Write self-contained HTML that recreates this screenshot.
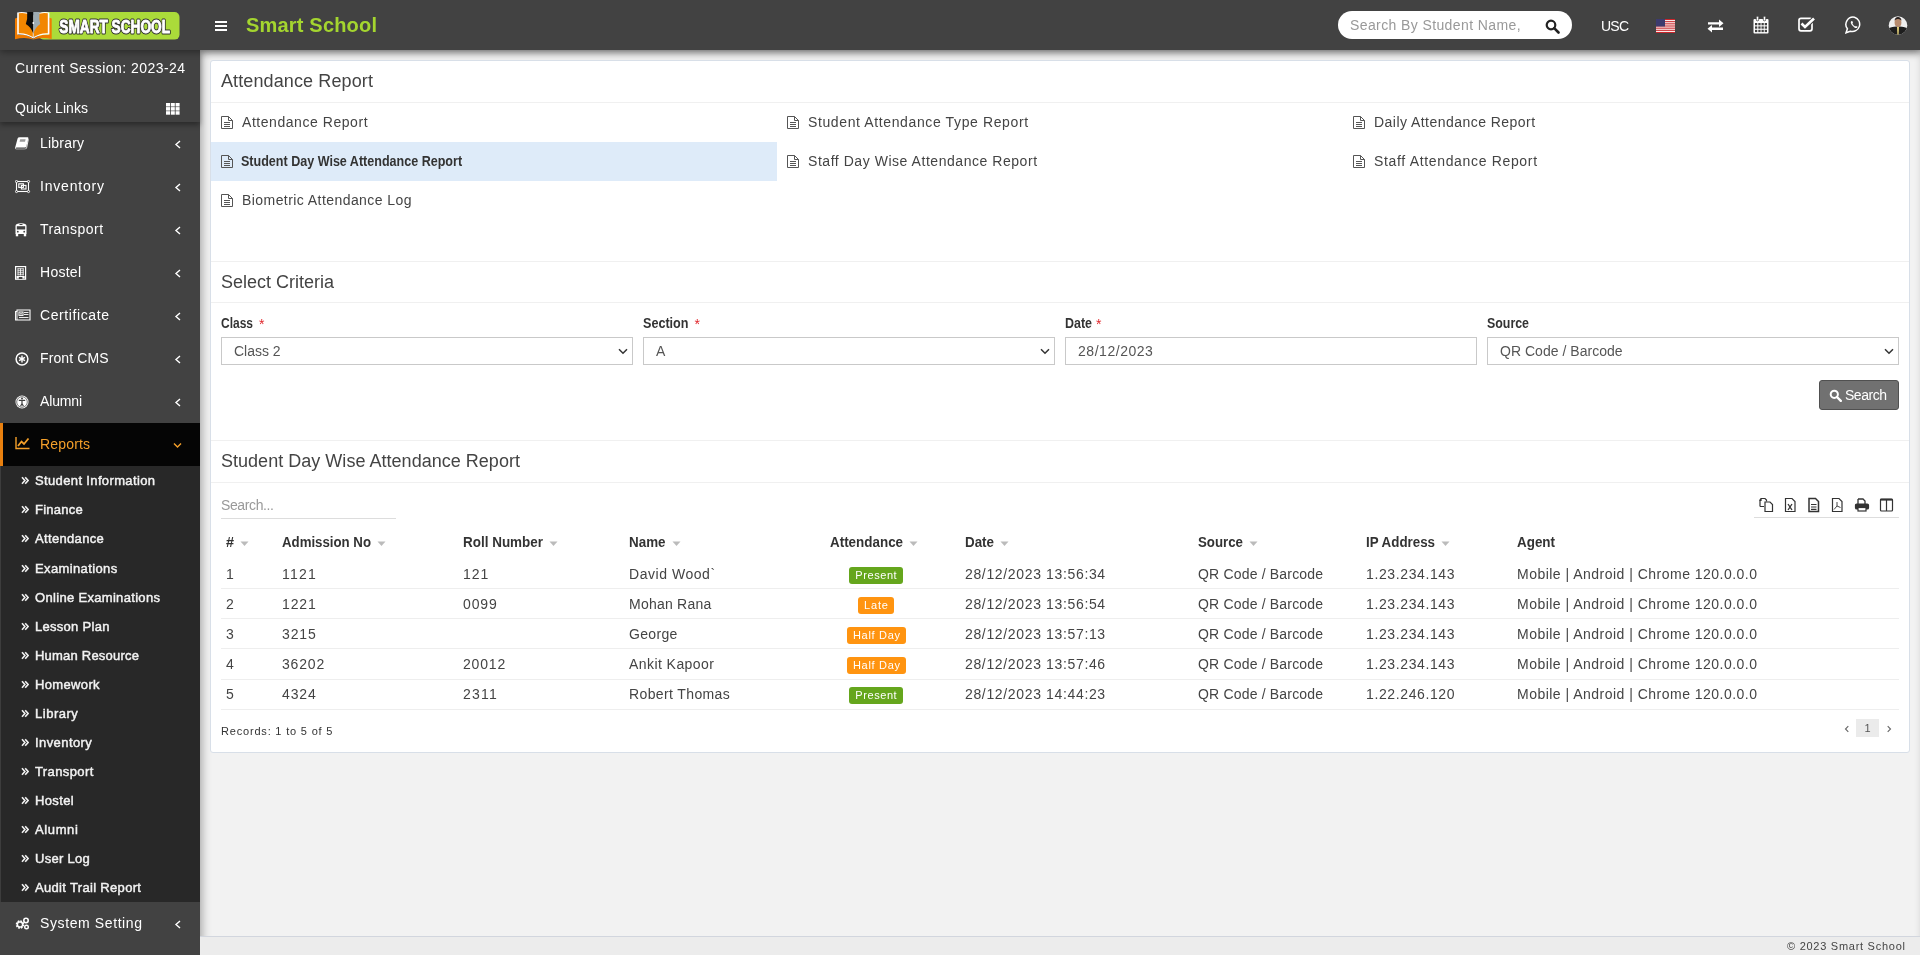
<!DOCTYPE html>
<html><head><meta charset="utf-8"><title>Smart School</title>
<style>
*{box-sizing:border-box;margin:0;padding:0}
html,body{width:1920px;height:955px;overflow:hidden}
body{font-family:"Liberation Sans",sans-serif;background:#f2f2f2;position:relative;color:#444;will-change:transform}
.t{position:absolute;white-space:nowrap;font-family:"Liberation Sans",sans-serif}
.r{position:absolute;display:block}
</style></head><body>
<div class="r" style="left:0px;top:0px;width:1920px;height:50px;background:#424242;z-index:6;box-shadow:0 2px 7px rgba(0,0,0,.38)"></div>
<svg class="r" style="left:0;top:0;z-index:7" width="200" height="50" viewBox="0 0 200 50">
<rect x="39" y="12" width="140.5" height="27.6" rx="5" fill="#abdb3a"/>
<path d="M15 18.6 L18 17.6 L18 35 Q26 33.6 33.3 39 L33.3 39.6 Q25 36.6 15 39.3 Z" fill="#f07b00"/>
<path d="M51.7 18.6 L48.6 17.6 L48.6 35 Q40.6 33.6 33.3 39 L33.3 39.6 Q41.6 36.6 51.7 38.9 Z" fill="#f07b00"/>
<path d="M17.2 12.4 Q26.5 11 33.3 15.5 V38.6 Q26 33.8 17.2 34.6 Z" fill="#fff"/>
<path d="M49.4 12.4 Q40.1 11 33.3 15.5 V38.6 Q40.6 33.8 49.4 34.6 Z" fill="#fff"/>
<path d="M18.8 13.2 Q26.5 12 32.8 16.2 V37 Q26 32.6 18.8 33.2 Z" fill="#f28600"/>
<path d="M47.8 13.2 Q40.1 12 33.8 16.2 V37 Q40.6 32.6 47.8 33.2 Z" fill="#f28600"/>
<path d="M27.2 12 H33.3 V33.5 Q31 27 25.8 24 Q27.8 19 27.2 12 Z" fill="#0c0c0c"/>
<path d="M39.6 12 H33.3 V33.5 Q35.6 27 40.2 24 Q38.8 19 39.6 12 Z" fill="#9eabb2"/>
<circle cx="33.3" cy="23" r="0.9" fill="#fff"/>
<text x="59.3" y="33" font-family="Liberation Sans" font-weight="bold" font-size="18.6" fill="#2e2e2e" stroke="#2e2e2e" stroke-width="3" stroke-linejoin="round" textLength="110.7" lengthAdjust="spacingAndGlyphs">SMART SCHOOL</text>
<text x="59.3" y="33" font-family="Liberation Sans" font-weight="bold" font-size="18.6" fill="#fff" stroke="#fff" stroke-width="0.9" stroke-linejoin="round" textLength="110.7" lengthAdjust="spacingAndGlyphs">SMART SCHOOL</text>
</svg>
<div class="r" style="left:215px;top:21px;width:12px;height:10px;z-index:7;border-top:2px solid #fff;border-bottom:2px solid #fff"></div>
<div class="r" style="left:215px;top:25px;width:12px;height:2px;z-index:7;background:#fff"></div>
<div class="t" style="left:246.00px;top:15.00px;font-size:20px;line-height:20px;color:#a4d52f;font-weight:bold;letter-spacing:0.188px;z-index:7;">Smart School</div>
<div class="r" style="left:1338px;top:11px;width:234px;height:28px;background:#fff;border-radius:14px;z-index:7"></div>
<div class="t" style="left:1350.00px;top:18.00px;font-size:14px;line-height:14px;color:#999;letter-spacing:0.394px;z-index:7;">Search By Student Name,</div>
<svg class="r" style="left:1545px;top:19px;z-index:7" width="15" height="15" viewBox="0 0 15 15"><circle cx="6" cy="6" r="4.3" fill="none" stroke="#222" stroke-width="2.2"/><path d="M9.2 9.2 L13.5 13.5" stroke="#222" stroke-width="2.6" stroke-linecap="round"/></svg>
<div class="t" style="left:1601.00px;top:19.00px;font-size:14px;line-height:14px;color:#fff;letter-spacing:-0.781px;z-index:7;">USC</div>
<svg class="r" style="left:1656px;top:19px;z-index:7" width="19" height="14" viewBox="0 0 19 14">
<rect width="19" height="14" fill="#fff"/>
<g fill="#c8262b"><rect y="0" width="19" height="1.1"/><rect y="2.15" width="19" height="1.1"/><rect y="4.3" width="19" height="1.1"/><rect y="6.45" width="19" height="1.1"/><rect y="8.6" width="19" height="1.1"/><rect y="10.75" width="19" height="1.1"/><rect y="12.9" width="19" height="1.1"/></g>
<rect width="9" height="7.5" fill="#3c3b6e"/></svg>
<svg class="r" style="left:1707px;top:19px;z-index:7" width="17" height="14" viewBox="0 0 17 14" fill="#fff">
<path d="M1 3.2 H12 V0.5 L16.5 4.3 L12 8 V5.4 H1Z"/><path d="M16 8.6 H5 V6 L0.5 9.8 L5 13.5 V10.9 H16Z"/></svg>
<svg class="r" style="left:1753px;top:16px;z-index:7" width="16" height="18" viewBox="0 0 16 18" fill="#fff">
<path d="M1.5 3 H14.5 Q15.5 3 15.5 4 V16.5 Q15.5 17.6 14.5 17.6 H1.5 Q0.5 17.6 0.5 16.5 V4 Q0.5 3 1.5 3Z"/>
<g fill="#424242"><rect x="2" y="7" width="2.3" height="2.3"/><rect x="5.3" y="7" width="2.3" height="2.3"/><rect x="8.5" y="7" width="2.3" height="2.3"/><rect x="11.7" y="7" width="2.3" height="2.3"/>
<rect x="2" y="10.4" width="2.3" height="2.3"/><rect x="5.3" y="10.4" width="2.3" height="2.3"/><rect x="8.5" y="10.4" width="2.3" height="2.3"/><rect x="11.7" y="10.4" width="2.3" height="2.3"/>
<rect x="2" y="13.8" width="2.3" height="2.3"/><rect x="5.3" y="13.8" width="2.3" height="2.3"/><rect x="8.5" y="13.8" width="2.3" height="2.3"/><rect x="11.7" y="13.8" width="2.3" height="2.3"/></g>
<rect x="3.3" y="0.3" width="2.4" height="4.5" rx="1" fill="#fff" stroke="#424242" stroke-width="0.8"/><rect x="10.3" y="0.3" width="2.4" height="4.5" rx="1" fill="#fff" stroke="#424242" stroke-width="0.8"/></svg>
<svg class="r" style="left:1798px;top:17px;z-index:7" width="18" height="15" viewBox="0 0 18 15">
<rect x="1" y="1.3" width="13" height="12.5" rx="2" fill="none" stroke="#fff" stroke-width="1.7"/>
<path d="M3.5 6.5 L7 10 L16 1.5" fill="none" stroke="#424242" stroke-width="4.5"/>
<path d="M3.5 6.5 L7 10 L16 1.5" fill="none" stroke="#fff" stroke-width="2.6"/></svg>
<svg class="r" style="left:1845px;top:16px;z-index:7" width="18" height="18" viewBox="0 0 18 18">
<path d="M9.5 1.2 A7.3 7.3 0 1 1 5.2 15.2 L1 16.8 L2.4 12.8 A7.3 7.3 0 0 1 9.5 1.2Z" fill="none" stroke="#fff" stroke-width="1.5"/>
<path d="M6.6 5 Q5.6 5.6 5.8 7 Q6.6 9.6 9.4 11.6 Q11.2 12.6 12.2 11.6 L12.6 10.8 L10.9 9.9 L10.1 10.6 Q8.3 9.6 7.4 7.6 L8 6.8 L7.3 5Z" fill="#fff"/></svg>
<svg class="r" style="left:1888px;top:16px;z-index:7" width="20" height="19" viewBox="0 0 20 19">
<defs><clipPath id="ac"><circle cx="10" cy="9.5" r="9.3"/></clipPath></defs>
<g clip-path="url(#ac)"><rect width="20" height="19" fill="#eee"/>
<path d="M0 19 L1 12 Q5 10 10 10.5 Q15 10 19 12 L20 19Z" fill="#1e1e1e"/>
<path d="M9 11 L11 11 L10.6 19 L9.4 19Z" fill="#e6d27a"/>
<ellipse cx="10" cy="6.5" rx="3.4" ry="4.4" fill="#b78b6e"/>
<path d="M6.5 4.5 Q7 1 10 1 Q13 1 13.5 4.5 Q12 2.8 10 3 Q8 2.8 6.5 4.5Z" fill="#2a2220"/></g></svg>
<div class="r" style="left:0px;top:50px;width:200px;height:905px;background:#424242;z-index:4"></div>
<div class="t" style="left:15.00px;top:61.00px;font-size:14px;line-height:14px;color:#fff;letter-spacing:0.458px;z-index:5;">Current Session: 2023-24</div>
<div class="r" style="left:0px;top:50px;width:200px;height:72px;background:#424242;z-index:5;box-shadow:0 3px 5px rgba(0,0,0,.35)"></div>
<div class="t" style="left:15.00px;top:101.00px;font-size:14px;line-height:14px;color:#fff;letter-spacing:0.066px;z-index:6;">Quick Links</div>
<div class="t" style="left:15.00px;top:61.00px;font-size:14px;line-height:14px;color:#fff;letter-spacing:0.458px;z-index:6;">Current Session: 2023-24</div>
<svg class="r" style="left:166px;top:103px;z-index:6" width="14" height="12" viewBox="0 0 14 12" fill="#fff"><rect x="0.0" y="0.0" width="4" height="3.5"/><rect x="0.0" y="4.1" width="4" height="3.5"/><rect x="0.0" y="8.2" width="4" height="3.5"/><rect x="4.8" y="0.0" width="4" height="3.5"/><rect x="4.8" y="4.1" width="4" height="3.5"/><rect x="4.8" y="8.2" width="4" height="3.5"/><rect x="9.6" y="0.0" width="4" height="3.5"/><rect x="9.6" y="4.1" width="4" height="3.5"/><rect x="9.6" y="8.2" width="4" height="3.5"/></svg>
<div class="t" style="left:40.00px;top:136.00px;font-size:14px;line-height:14px;color:#fff;letter-spacing:0.206px;z-index:5;">Library</div>
<svg class="r" style="left:15px;top:137px;z-index:5" width="16" height="14" viewBox="0 0 16 14"><path d="M4.6 0.3 H12.6 Q13.6 0.3 13.3 1.4 L11.3 9.6 Q11 10.6 10 10.6 H1.6 Q0.8 10.6 0.6 11.2 Q0.6 11.8 1.4 11.8 H10.6 L10.9 11.8 Q10.4 12.2 9.6 12.2 H1.2 Q-0.2 12.2 0.1 10.8 L2.6 1.6 Q3 0.3 4.6 0.3Z" fill="#fff"/><path d="M5.2 2.3 H10.6 L10 4.8 H4.6Z" fill="#9a9a9a"/><path d="M12.6 3 L13.3 2.4 L11.6 10.8 Q11.3 11.8 10.6 11.8" fill="none" stroke="#fff" stroke-width="0.9"/></svg>
<svg class="r" style="left:174px;top:140px;z-index:5" width="8" height="9" viewBox="0 0 8 9"><path d="M6 1 L2 4.5 L6 8" fill="none" stroke="#fff" stroke-width="1.4"/></svg>
<div class="t" style="left:40.00px;top:179.00px;font-size:14px;line-height:14px;color:#fff;letter-spacing:0.805px;z-index:5;">Inventory</div>
<svg class="r" style="left:15px;top:180px;z-index:5" width="16" height="14" viewBox="0 0 16 14"><rect x="1.5" y="1.5" width="12" height="10" fill="none" stroke="#fff" stroke-width="1.1"/><rect x="3.8" y="3.8" width="4.6" height="3.6" fill="none" stroke="#fff" stroke-width="1.1"/><rect x="6.4" y="5.4" width="4.6" height="3.6" fill="none" stroke="#fff" stroke-width="1.1"/><g fill="#424242" stroke="#fff" stroke-width="0.9"><circle cx="1.5" cy="1.5" r="1.1"/><circle cx="13.5" cy="1.5" r="1.1"/><circle cx="1.5" cy="11.5" r="1.1"/><circle cx="13.5" cy="11.5" r="1.1"/></g></svg>
<svg class="r" style="left:174px;top:183px;z-index:5" width="8" height="9" viewBox="0 0 8 9"><path d="M6 1 L2 4.5 L6 8" fill="none" stroke="#fff" stroke-width="1.4"/></svg>
<div class="t" style="left:40.00px;top:222.00px;font-size:14px;line-height:14px;color:#fff;letter-spacing:0.455px;z-index:5;">Transport</div>
<svg class="r" style="left:15px;top:223px;z-index:5" width="16" height="14" viewBox="0 0 16 14"><path d="M0.5 3 Q0.5 0.3 6 0.3 Q11.5 0.3 11.5 3 V11 H0.5Z" fill="#fff"/><rect x="1.8" y="3.2" width="8.4" height="3.3" fill="#424242"/><circle cx="2.8" cy="8.7" r="0.9" fill="#424242"/><circle cx="9.2" cy="8.7" r="0.9" fill="#424242"/><rect x="0.8" y="10.5" width="2.4" height="2.8" fill="#fff"/><rect x="8.8" y="10.5" width="2.4" height="2.8" fill="#fff"/><rect x="4.5" y="1" width="3" height="1" fill="#424242"/></svg>
<svg class="r" style="left:174px;top:226px;z-index:5" width="8" height="9" viewBox="0 0 8 9"><path d="M6 1 L2 4.5 L6 8" fill="none" stroke="#fff" stroke-width="1.4"/></svg>
<div class="t" style="left:40.00px;top:265.00px;font-size:14px;line-height:14px;color:#fff;letter-spacing:0.266px;z-index:5;">Hostel</div>
<svg class="r" style="left:15px;top:266px;z-index:5" width="16" height="14" viewBox="0 0 16 14"><rect x="0.6" y="0.6" width="10" height="12.6" fill="none" stroke="#fff" stroke-width="1.2"/><g fill="#fff"><rect x="2.6" y="2.4" width="6" height="0.8"/><rect x="2.6" y="4.4" width="6" height="0.8"/><rect x="2.6" y="6.4" width="6" height="0.8"/><rect x="2.6" y="8.4" width="6" height="0.8"/><rect x="2.6" y="2.4" width="0.8" height="7"/><rect x="5.2" y="2.4" width="0.8" height="7"/><rect x="7.8" y="2.4" width="0.8" height="7"/><rect x="1.5" y="10" width="8.2" height="2.5"/></g><rect x="3.8" y="11" width="3.6" height="2" fill="#424242"/></svg>
<svg class="r" style="left:174px;top:269px;z-index:5" width="8" height="9" viewBox="0 0 8 9"><path d="M6 1 L2 4.5 L6 8" fill="none" stroke="#fff" stroke-width="1.4"/></svg>
<div class="t" style="left:40.00px;top:308.00px;font-size:14px;line-height:14px;color:#fff;letter-spacing:0.600px;z-index:5;">Certificate</div>
<svg class="r" style="left:15px;top:309px;z-index:5" width="16" height="14" viewBox="0 0 16 14"><path d="M2 1 H15 V11 H0.6 V2.5 H2Z" fill="none" stroke="#fff" stroke-width="1.1"/><path d="M2 2.5 V11" stroke="#fff" stroke-width="0.9"/><rect x="4" y="3" width="4" height="3.4" fill="none" stroke="#fff" stroke-width="1"/><rect x="5.2" y="4.2" width="1.6" height="1.2" fill="#fff"/><path d="M9 3.5 H13.5 M9 5.5 H13.5 M4 8.5 H13.5" stroke="#fff" stroke-width="0.9"/></svg>
<svg class="r" style="left:174px;top:312px;z-index:5" width="8" height="9" viewBox="0 0 8 9"><path d="M6 1 L2 4.5 L6 8" fill="none" stroke="#fff" stroke-width="1.4"/></svg>
<div class="t" style="left:40.00px;top:351.00px;font-size:14px;line-height:14px;color:#fff;letter-spacing:0.105px;z-index:5;">Front CMS</div>
<svg class="r" style="left:15px;top:352px;z-index:5" width="16" height="14" viewBox="0 0 16 14"><circle cx="7" cy="7" r="5.9" fill="none" stroke="#fff" stroke-width="1.5"/><path d="M7 3.6 V10.4 M4.05 5.3 L9.95 8.7 M4.05 8.7 L9.95 5.3" stroke="#fff" stroke-width="1.4"/></svg>
<svg class="r" style="left:174px;top:355px;z-index:5" width="8" height="9" viewBox="0 0 8 9"><path d="M6 1 L2 4.5 L6 8" fill="none" stroke="#fff" stroke-width="1.4"/></svg>
<div class="t" style="left:40.00px;top:394.00px;font-size:14px;line-height:14px;color:#fff;letter-spacing:-0.156px;z-index:5;">Alumni</div>
<svg class="r" style="left:15px;top:395px;z-index:5" width="16" height="14" viewBox="0 0 16 14"><circle cx="7" cy="7" r="6.5" fill="#fff"/><circle cx="7" cy="7" r="5.3" fill="none" stroke="#424242" stroke-width="0.7"/><circle cx="7" cy="3.6" r="1" fill="#424242"/><path d="M3.8 5.4 H10.2 M7 5.4 V8.4 L5.6 11.2 M7 8.4 L8.4 11.2" stroke="#424242" stroke-width="1.2" fill="none"/></svg>
<svg class="r" style="left:174px;top:398px;z-index:5" width="8" height="9" viewBox="0 0 8 9"><path d="M6 1 L2 4.5 L6 8" fill="none" stroke="#fff" stroke-width="1.4"/></svg>
<div class="r" style="left:0px;top:423px;width:200px;height:43px;background:#050505;z-index:5"></div>
<div class="r" style="left:0px;top:423px;width:3px;height:43px;background:#e8800f;z-index:6"></div>
<div class="t" style="left:40.00px;top:437.00px;font-size:14px;line-height:14px;color:#f5a02a;letter-spacing:0.167px;z-index:6;">Reports</div>
<svg class="r" style="left:15px;top:436px;z-index:6" width="15" height="14" viewBox="0 0 15 14"><path d="M1 1 V12.5 H14.5" fill="none" stroke="#f5a02a" stroke-width="1.4"/><path d="M3 10 L6.5 5.5 L9 8 L13.5 2.5" fill="none" stroke="#f5a02a" stroke-width="1.8"/></svg>
<svg class="r" style="left:173px;top:442px;z-index:6" width="9" height="7" viewBox="0 0 9 7"><path d="M1 1.5 L4.5 5 L8 1.5" fill="none" stroke="#f5a02a" stroke-width="1.4"/></svg>
<div class="r" style="left:0px;top:466px;width:200px;height:436px;background:#282828;z-index:5;border-left:1px solid #3d3d3d"></div>
<div class="t" style="left:35.00px;top:474.00px;font-size:13px;line-height:13px;color:#f2f2f2;letter-spacing:0.363px;z-index:6;-webkit-text-stroke:0.45px #f2f2f2;">Student Information</div>
<svg class="r" style="left:21px;top:476px;z-index:6" width="8" height="9" viewBox="0 0 8 9"><path d="M1 1.2 L3.9 4.5 L1 7.8 M4.2 1.2 L7.1 4.5 L4.2 7.8" fill="none" stroke="#f2f2f2" stroke-width="1.6"/></svg>
<div class="t" style="left:35.00px;top:503.00px;font-size:13px;line-height:13px;color:#f2f2f2;letter-spacing:0.247px;z-index:6;-webkit-text-stroke:0.45px #f2f2f2;">Finance</div>
<svg class="r" style="left:21px;top:505px;z-index:6" width="8" height="9" viewBox="0 0 8 9"><path d="M1 1.2 L3.9 4.5 L1 7.8 M4.2 1.2 L7.1 4.5 L4.2 7.8" fill="none" stroke="#f2f2f2" stroke-width="1.6"/></svg>
<div class="t" style="left:35.00px;top:532.00px;font-size:13px;line-height:13px;color:#f2f2f2;letter-spacing:0.335px;z-index:6;-webkit-text-stroke:0.45px #f2f2f2;">Attendance</div>
<svg class="r" style="left:21px;top:534px;z-index:6" width="8" height="9" viewBox="0 0 8 9"><path d="M1 1.2 L3.9 4.5 L1 7.8 M4.2 1.2 L7.1 4.5 L4.2 7.8" fill="none" stroke="#f2f2f2" stroke-width="1.6"/></svg>
<div class="t" style="left:35.00px;top:562.00px;font-size:13px;line-height:13px;color:#f2f2f2;letter-spacing:0.373px;z-index:6;-webkit-text-stroke:0.45px #f2f2f2;">Examinations</div>
<svg class="r" style="left:21px;top:564px;z-index:6" width="8" height="9" viewBox="0 0 8 9"><path d="M1 1.2 L3.9 4.5 L1 7.8 M4.2 1.2 L7.1 4.5 L4.2 7.8" fill="none" stroke="#f2f2f2" stroke-width="1.6"/></svg>
<div class="t" style="left:35.00px;top:591.00px;font-size:13px;line-height:13px;color:#f2f2f2;letter-spacing:0.317px;z-index:6;-webkit-text-stroke:0.45px #f2f2f2;">Online Examinations</div>
<svg class="r" style="left:21px;top:593px;z-index:6" width="8" height="9" viewBox="0 0 8 9"><path d="M1 1.2 L3.9 4.5 L1 7.8 M4.2 1.2 L7.1 4.5 L4.2 7.8" fill="none" stroke="#f2f2f2" stroke-width="1.6"/></svg>
<div class="t" style="left:35.00px;top:620.00px;font-size:13px;line-height:13px;color:#f2f2f2;letter-spacing:0.286px;z-index:6;-webkit-text-stroke:0.45px #f2f2f2;">Lesson Plan</div>
<svg class="r" style="left:21px;top:622px;z-index:6" width="8" height="9" viewBox="0 0 8 9"><path d="M1 1.2 L3.9 4.5 L1 7.8 M4.2 1.2 L7.1 4.5 L4.2 7.8" fill="none" stroke="#f2f2f2" stroke-width="1.6"/></svg>
<div class="t" style="left:35.00px;top:649.00px;font-size:13px;line-height:13px;color:#f2f2f2;letter-spacing:0.212px;z-index:6;-webkit-text-stroke:0.45px #f2f2f2;">Human Resource</div>
<svg class="r" style="left:21px;top:651px;z-index:6" width="8" height="9" viewBox="0 0 8 9"><path d="M1 1.2 L3.9 4.5 L1 7.8 M4.2 1.2 L7.1 4.5 L4.2 7.8" fill="none" stroke="#f2f2f2" stroke-width="1.6"/></svg>
<div class="t" style="left:35.00px;top:678.00px;font-size:13px;line-height:13px;color:#f2f2f2;letter-spacing:0.352px;z-index:6;-webkit-text-stroke:0.45px #f2f2f2;">Homework</div>
<svg class="r" style="left:21px;top:680px;z-index:6" width="8" height="9" viewBox="0 0 8 9"><path d="M1 1.2 L3.9 4.5 L1 7.8 M4.2 1.2 L7.1 4.5 L4.2 7.8" fill="none" stroke="#f2f2f2" stroke-width="1.6"/></svg>
<div class="t" style="left:35.00px;top:707.00px;font-size:13px;line-height:13px;color:#f2f2f2;letter-spacing:0.516px;z-index:6;-webkit-text-stroke:0.45px #f2f2f2;">Library</div>
<svg class="r" style="left:21px;top:709px;z-index:6" width="8" height="9" viewBox="0 0 8 9"><path d="M1 1.2 L3.9 4.5 L1 7.8 M4.2 1.2 L7.1 4.5 L4.2 7.8" fill="none" stroke="#f2f2f2" stroke-width="1.6"/></svg>
<div class="t" style="left:35.00px;top:736.00px;font-size:13px;line-height:13px;color:#f2f2f2;letter-spacing:0.424px;z-index:6;-webkit-text-stroke:0.45px #f2f2f2;">Inventory</div>
<svg class="r" style="left:21px;top:738px;z-index:6" width="8" height="9" viewBox="0 0 8 9"><path d="M1 1.2 L3.9 4.5 L1 7.8 M4.2 1.2 L7.1 4.5 L4.2 7.8" fill="none" stroke="#f2f2f2" stroke-width="1.6"/></svg>
<div class="t" style="left:35.00px;top:765.00px;font-size:13px;line-height:13px;color:#f2f2f2;letter-spacing:0.390px;z-index:6;-webkit-text-stroke:0.45px #f2f2f2;">Transport</div>
<svg class="r" style="left:21px;top:767px;z-index:6" width="8" height="9" viewBox="0 0 8 9"><path d="M1 1.2 L3.9 4.5 L1 7.8 M4.2 1.2 L7.1 4.5 L4.2 7.8" fill="none" stroke="#f2f2f2" stroke-width="1.6"/></svg>
<div class="t" style="left:35.00px;top:794.00px;font-size:13px;line-height:13px;color:#f2f2f2;letter-spacing:0.352px;z-index:6;-webkit-text-stroke:0.45px #f2f2f2;">Hostel</div>
<svg class="r" style="left:21px;top:796px;z-index:6" width="8" height="9" viewBox="0 0 8 9"><path d="M1 1.2 L3.9 4.5 L1 7.8 M4.2 1.2 L7.1 4.5 L4.2 7.8" fill="none" stroke="#f2f2f2" stroke-width="1.6"/></svg>
<div class="t" style="left:35.00px;top:823.00px;font-size:13px;line-height:13px;color:#f2f2f2;letter-spacing:0.613px;z-index:6;-webkit-text-stroke:0.45px #f2f2f2;">Alumni</div>
<svg class="r" style="left:21px;top:825px;z-index:6" width="8" height="9" viewBox="0 0 8 9"><path d="M1 1.2 L3.9 4.5 L1 7.8 M4.2 1.2 L7.1 4.5 L4.2 7.8" fill="none" stroke="#f2f2f2" stroke-width="1.6"/></svg>
<div class="t" style="left:35.00px;top:852.00px;font-size:13px;line-height:13px;color:#f2f2f2;letter-spacing:0.286px;z-index:6;-webkit-text-stroke:0.45px #f2f2f2;">User Log</div>
<svg class="r" style="left:21px;top:854px;z-index:6" width="8" height="9" viewBox="0 0 8 9"><path d="M1 1.2 L3.9 4.5 L1 7.8 M4.2 1.2 L7.1 4.5 L4.2 7.8" fill="none" stroke="#f2f2f2" stroke-width="1.6"/></svg>
<div class="t" style="left:35.00px;top:881.00px;font-size:13px;line-height:13px;color:#f2f2f2;letter-spacing:0.326px;z-index:6;-webkit-text-stroke:0.45px #f2f2f2;">Audit Trail Report</div>
<svg class="r" style="left:21px;top:883px;z-index:6" width="8" height="9" viewBox="0 0 8 9"><path d="M1 1.2 L3.9 4.5 L1 7.8 M4.2 1.2 L7.1 4.5 L4.2 7.8" fill="none" stroke="#f2f2f2" stroke-width="1.6"/></svg>
<div class="t" style="left:40.00px;top:916.00px;font-size:14px;line-height:14px;color:#fff;letter-spacing:0.605px;z-index:5;">System Setting</div>
<svg class="r" style="left:15px;top:917px;z-index:5" width="15" height="13" viewBox="0 0 15 13"><circle cx="5" cy="7.5" r="3.2" fill="none" stroke="#fff" stroke-width="2.2" stroke-dasharray="1.6 0.9"/><circle cx="5" cy="7.5" r="2.6" fill="none" stroke="#fff" stroke-width="1.4"/><circle cx="11" cy="3.5" r="2.2" fill="none" stroke="#fff" stroke-width="1.6"/><circle cx="11.5" cy="10" r="1.8" fill="none" stroke="#fff" stroke-width="1.4"/></svg>
<svg class="r" style="left:174px;top:920px;z-index:5" width="8" height="9" viewBox="0 0 8 9"><path d="M6 1 L2 4.5 L6 8" fill="none" stroke="#fff" stroke-width="1.4"/></svg>
<div class="r" style="left:200px;top:50px;width:1720px;height:905px;background:#f2f2f2;z-index:1;box-shadow:inset 3px 3px 10px -1px rgba(0,0,0,.32)"></div>
<div class="r" style="left:210px;top:60px;width:1700px;height:693px;background:#fff;border:1px solid #d8dfe8;border-radius:3px;z-index:2"></div>
<div class="r" style="left:211px;top:102px;width:1698px;height:1px;background:#f0f0f0;z-index:3"></div>
<div class="r" style="left:211px;top:261px;width:1698px;height:1px;background:#f0f0f0;z-index:3"></div>
<div class="r" style="left:211px;top:302px;width:1698px;height:1px;background:#f0f0f0;z-index:3"></div>
<div class="r" style="left:211px;top:440px;width:1698px;height:1px;background:#f0f0f0;z-index:3"></div>
<div class="r" style="left:211px;top:482px;width:1698px;height:1px;background:#f0f0f0;z-index:3"></div>
<div class="t" style="left:221.00px;top:72.00px;font-size:18px;line-height:18px;color:#444;letter-spacing:0.116px;z-index:3;">Attendance Report</div>
<div class="r" style="left:211px;top:142px;width:566px;height:39px;background:#deebf9;z-index:3"></div>
<svg class="r" style="left:221px;top:116px;z-index:4" width="12" height="13" viewBox="0 0 12 13"><path d="M0.5 0.5 H7.5 L11.5 4.5 V12.5 H0.5Z" fill="none" stroke="#555" stroke-width="1"/><path d="M7.5 0.5 V4.5 H11.5" fill="none" stroke="#555" stroke-width="1"/><path d="M3 6.5 H9 M3 8.5 H9 M3 10.5 H9" stroke="#555" stroke-width="1"/></svg>
<div class="t" style="left:242.00px;top:115.00px;font-size:14px;line-height:14px;color:#444;letter-spacing:0.550px;z-index:4;">Attendance Report</div>
<svg class="r" style="left:787px;top:116px;z-index:4" width="12" height="13" viewBox="0 0 12 13"><path d="M0.5 0.5 H7.5 L11.5 4.5 V12.5 H0.5Z" fill="none" stroke="#555" stroke-width="1"/><path d="M7.5 0.5 V4.5 H11.5" fill="none" stroke="#555" stroke-width="1"/><path d="M3 6.5 H9 M3 8.5 H9 M3 10.5 H9" stroke="#555" stroke-width="1"/></svg>
<div class="t" style="left:808.00px;top:115.00px;font-size:14px;line-height:14px;color:#444;letter-spacing:0.619px;z-index:4;">Student Attendance Type Report</div>
<svg class="r" style="left:1353px;top:116px;z-index:4" width="12" height="13" viewBox="0 0 12 13"><path d="M0.5 0.5 H7.5 L11.5 4.5 V12.5 H0.5Z" fill="none" stroke="#555" stroke-width="1"/><path d="M7.5 0.5 V4.5 H11.5" fill="none" stroke="#555" stroke-width="1"/><path d="M3 6.5 H9 M3 8.5 H9 M3 10.5 H9" stroke="#555" stroke-width="1"/></svg>
<div class="t" style="left:1374.00px;top:115.00px;font-size:14px;line-height:14px;color:#444;letter-spacing:0.457px;z-index:4;">Daily Attendance Report</div>
<svg class="r" style="left:221px;top:155px;z-index:4" width="12" height="13" viewBox="0 0 12 13"><path d="M0.5 0.5 H7.5 L11.5 4.5 V12.5 H0.5Z" fill="none" stroke="#555" stroke-width="1"/><path d="M7.5 0.5 V4.5 H11.5" fill="none" stroke="#555" stroke-width="1"/><path d="M3 6.5 H9 M3 8.5 H9 M3 10.5 H9" stroke="#555" stroke-width="1"/></svg>
<div class="t" style="left:241.00px;top:154.00px;font-size:14px;line-height:14px;color:#333;font-weight:bold;transform:scaleX(0.8961);transform-origin:0 0;z-index:4;">Student Day Wise Attendance Report</div>
<svg class="r" style="left:787px;top:155px;z-index:4" width="12" height="13" viewBox="0 0 12 13"><path d="M0.5 0.5 H7.5 L11.5 4.5 V12.5 H0.5Z" fill="none" stroke="#555" stroke-width="1"/><path d="M7.5 0.5 V4.5 H11.5" fill="none" stroke="#555" stroke-width="1"/><path d="M3 6.5 H9 M3 8.5 H9 M3 10.5 H9" stroke="#555" stroke-width="1"/></svg>
<div class="t" style="left:808.00px;top:154.00px;font-size:14px;line-height:14px;color:#444;letter-spacing:0.543px;z-index:4;">Staff Day Wise Attendance Report</div>
<svg class="r" style="left:1353px;top:155px;z-index:4" width="12" height="13" viewBox="0 0 12 13"><path d="M0.5 0.5 H7.5 L11.5 4.5 V12.5 H0.5Z" fill="none" stroke="#555" stroke-width="1"/><path d="M7.5 0.5 V4.5 H11.5" fill="none" stroke="#555" stroke-width="1"/><path d="M3 6.5 H9 M3 8.5 H9 M3 10.5 H9" stroke="#555" stroke-width="1"/></svg>
<div class="t" style="left:1374.00px;top:154.00px;font-size:14px;line-height:14px;color:#444;letter-spacing:0.665px;z-index:4;">Staff Attendance Report</div>
<svg class="r" style="left:221px;top:194px;z-index:4" width="12" height="13" viewBox="0 0 12 13"><path d="M0.5 0.5 H7.5 L11.5 4.5 V12.5 H0.5Z" fill="none" stroke="#555" stroke-width="1"/><path d="M7.5 0.5 V4.5 H11.5" fill="none" stroke="#555" stroke-width="1"/><path d="M3 6.5 H9 M3 8.5 H9 M3 10.5 H9" stroke="#555" stroke-width="1"/></svg>
<div class="t" style="left:242.00px;top:193.00px;font-size:14px;line-height:14px;color:#444;letter-spacing:0.435px;z-index:4;">Biometric Attendance Log</div>
<div class="t" style="left:221.00px;top:273.00px;font-size:18px;line-height:18px;color:#444;z-index:3;">Select Criteria</div>
<div class="t" style="left:221.00px;top:316.00px;font-size:14px;line-height:14px;color:#333;font-weight:bold;transform:scaleX(0.8569);transform-origin:0 0;z-index:3;">Class</div>
<div class="t" style="left:259.00px;top:317.00px;font-size:14px;line-height:14px;color:#e0262b;z-index:3;">*</div>
<div class="r" style="left:221px;top:337px;width:412px;height:28px;background:#fff;border:1px solid #c9c9c9;z-index:3"></div>
<div class="t" style="left:234.00px;top:344.00px;font-size:14px;line-height:14px;color:#555;letter-spacing:-0.016px;z-index:4;">Class 2</div>
<svg class="r" style="left:618px;top:348px;z-index:4" width="10" height="7" viewBox="0 0 10 7"><path d="M1 1.2 L5 5.2 L9 1.2" fill="none" stroke="#333" stroke-width="1.5"/></svg>
<div class="t" style="left:643.00px;top:316.00px;font-size:14px;line-height:14px;color:#333;font-weight:bold;transform:scaleX(0.9002);transform-origin:0 0;z-index:3;">Section</div>
<div class="t" style="left:694.50px;top:317.00px;font-size:14px;line-height:14px;color:#e0262b;z-index:3;">*</div>
<div class="r" style="left:643px;top:337px;width:412px;height:28px;background:#fff;border:1px solid #c9c9c9;z-index:3"></div>
<div class="t" style="left:656.00px;top:344.00px;font-size:14px;line-height:14px;color:#555;z-index:4;">A</div>
<svg class="r" style="left:1040px;top:348px;z-index:4" width="10" height="7" viewBox="0 0 10 7"><path d="M1 1.2 L5 5.2 L9 1.2" fill="none" stroke="#333" stroke-width="1.5"/></svg>
<div class="t" style="left:1065.00px;top:316.00px;font-size:14px;line-height:14px;color:#333;font-weight:bold;transform:scaleX(0.8903);transform-origin:0 0;z-index:3;">Date</div>
<div class="t" style="left:1096.00px;top:317.00px;font-size:14px;line-height:14px;color:#e0262b;z-index:3;">*</div>
<div class="r" style="left:1065px;top:337px;width:412px;height:28px;background:#fff;border:1px solid #c9c9c9;z-index:3"></div>
<div class="t" style="left:1078.00px;top:344.00px;font-size:14px;line-height:14px;color:#555;letter-spacing:0.538px;z-index:4;">28/12/2023</div>
<div class="t" style="left:1487.00px;top:316.00px;font-size:14px;line-height:14px;color:#333;font-weight:bold;transform:scaleX(0.8851);transform-origin:0 0;z-index:3;">Source</div>
<div class="r" style="left:1487px;top:337px;width:412px;height:28px;background:#fff;border:1px solid #c9c9c9;z-index:3"></div>
<div class="t" style="left:1500.00px;top:344.00px;font-size:14px;line-height:14px;color:#555;letter-spacing:0.028px;z-index:4;">QR Code / Barcode</div>
<svg class="r" style="left:1884px;top:348px;z-index:4" width="10" height="7" viewBox="0 0 10 7"><path d="M1 1.2 L5 5.2 L9 1.2" fill="none" stroke="#333" stroke-width="1.5"/></svg>
<div class="r" style="left:1819px;top:380px;width:80px;height:30px;background:#717171;border:1px solid #505050;border-radius:3px;z-index:3"></div>
<svg class="r" style="left:1829px;top:389px;z-index:4" width="13" height="13" viewBox="0 0 13 13"><circle cx="5.3" cy="5.3" r="3.6" fill="none" stroke="#fff" stroke-width="2"/><path d="M8 8 L11.8 11.8" stroke="#fff" stroke-width="2.4" stroke-linecap="round"/></svg>
<div class="t" style="left:1845.00px;top:388.00px;font-size:14px;line-height:14px;color:#fff;letter-spacing:-0.469px;z-index:4;">Search</div>
<div class="t" style="left:221.00px;top:452.00px;font-size:18px;line-height:18px;color:#444;letter-spacing:0.024px;z-index:3;">Student Day Wise Attendance Report</div>
<div class="t" style="left:221.00px;top:498.00px;font-size:14px;line-height:14px;color:#999;letter-spacing:-0.377px;z-index:3;">Search...</div>
<div class="r" style="left:221px;top:518px;width:175px;height:1px;background:#ddd;z-index:3"></div>
<svg class="r" style="left:1758px;top:497px;z-index:4" width="140" height="16" viewBox="0 0 140 16" fill="none" stroke="#333" stroke-width="1.2"><path d="M3 1.5 H7 L8.5 3 V4.5 M2 9.5 V3 L3 1.5 M2 9.5 H6"/><path d="M7 5 H12 L14.5 7.5 V14.5 H7Z"/><path d="M3 1.5 V3.5 H1.5"/><path d="M27.5 1.5 H34 L37 4.5 V14.5 H27.5Z"/><path d="M30 7 L34 13 M34 7 L30 13" stroke-width="1.3"/><path d="M51 1.5 H57.5 L60.5 4.5 V14.5 H51Z" stroke-width="1.5"/><path d="M53 7.5 H58.5 M53 10 H58.5 M53 12.3 H58.5"/><path d="M74.5 1.5 H81 L84 4.5 V14.5 H74.5Z"/><path d="M79 5 V9 L76 12.5 M79 9 L82.5 10.5" stroke-width="0.9"/><path d="M100 2 H105 L107 4 V7 M100 7 V2" stroke-width="1.3"/><rect x="97.5" y="7" width="13" height="5" rx="1.2" fill="#333"/><rect x="100" y="10.5" width="8" height="3.5" fill="#fff" stroke="#333"/><rect x="122.5" y="2" width="12" height="12" rx="1"/><path d="M122.5 2.7 H134.5" stroke-width="1.8"/><path d="M128.5 2 V14"/></svg>
<div class="r" style="left:1754px;top:517px;width:145px;height:1px;background:#ddd;z-index:3"></div>
<div class="t" style="left:226.00px;top:535.00px;font-size:14px;line-height:14px;color:#333;font-weight:bold;transform:scaleX(1.0281);transform-origin:0 0;z-index:3;">#</div>
<svg class="r" style="left:240.0px;top:541px;z-index:3" width="9" height="6" viewBox="0 0 9 6"><path d="M0.5 0.5 H8.5 L4.5 5Z" fill="#bbb"/></svg>
<div class="t" style="left:282.00px;top:535.00px;font-size:14px;line-height:14px;color:#333;font-weight:bold;transform:scaleX(0.9459);transform-origin:0 0;z-index:3;">Admission No</div>
<svg class="r" style="left:377.0px;top:541px;z-index:3" width="9" height="6" viewBox="0 0 9 6"><path d="M0.5 0.5 H8.5 L4.5 5Z" fill="#bbb"/></svg>
<div class="t" style="left:463.00px;top:535.00px;font-size:14px;line-height:14px;color:#333;font-weight:bold;transform:scaleX(0.9613);transform-origin:0 0;z-index:3;">Roll Number</div>
<svg class="r" style="left:549.0px;top:541px;z-index:3" width="9" height="6" viewBox="0 0 9 6"><path d="M0.5 0.5 H8.5 L4.5 5Z" fill="#bbb"/></svg>
<div class="t" style="left:629.00px;top:535.00px;font-size:14px;line-height:14px;color:#333;font-weight:bold;transform:scaleX(0.9574);transform-origin:0 0;z-index:3;">Name</div>
<svg class="r" style="left:671.5px;top:541px;z-index:3" width="9" height="6" viewBox="0 0 9 6"><path d="M0.5 0.5 H8.5 L4.5 5Z" fill="#bbb"/></svg>
<div class="t" style="left:830.00px;top:535.00px;font-size:14px;line-height:14px;color:#333;font-weight:bold;transform:scaleX(0.9582);transform-origin:0 0;z-index:3;">Attendance</div>
<svg class="r" style="left:909.0px;top:541px;z-index:3" width="9" height="6" viewBox="0 0 9 6"><path d="M0.5 0.5 H8.5 L4.5 5Z" fill="#bbb"/></svg>
<div class="t" style="left:965.00px;top:535.00px;font-size:14px;line-height:14px;color:#333;font-weight:bold;transform:scaleX(0.9562);transform-origin:0 0;z-index:3;">Date</div>
<svg class="r" style="left:1000.0px;top:541px;z-index:3" width="9" height="6" viewBox="0 0 9 6"><path d="M0.5 0.5 H8.5 L4.5 5Z" fill="#bbb"/></svg>
<div class="t" style="left:1198.00px;top:535.00px;font-size:14px;line-height:14px;color:#333;font-weight:bold;transform:scaleX(0.9483);transform-origin:0 0;z-index:3;">Source</div>
<svg class="r" style="left:1249.0px;top:541px;z-index:3" width="9" height="6" viewBox="0 0 9 6"><path d="M0.5 0.5 H8.5 L4.5 5Z" fill="#bbb"/></svg>
<div class="t" style="left:1366.00px;top:535.00px;font-size:14px;line-height:14px;color:#333;font-weight:bold;transform:scaleX(0.9536);transform-origin:0 0;z-index:3;">IP Address</div>
<svg class="r" style="left:1441.0px;top:541px;z-index:3" width="9" height="6" viewBox="0 0 9 6"><path d="M0.5 0.5 H8.5 L4.5 5Z" fill="#bbb"/></svg>
<div class="t" style="left:1517.00px;top:535.00px;font-size:14px;line-height:14px;color:#333;font-weight:bold;transform:scaleX(0.9586);transform-origin:0 0;z-index:3;">Agent</div>
<div class="t" style="left:226.00px;top:567.00px;font-size:14px;line-height:14px;color:#444;z-index:3;">1</div>
<div class="t" style="left:282.00px;top:567.00px;font-size:14px;line-height:14px;color:#444;letter-spacing:1.210px;z-index:3;">1121</div>
<div class="t" style="left:463.00px;top:567.00px;font-size:14px;line-height:14px;color:#444;letter-spacing:0.975px;z-index:3;">121</div>
<div class="t" style="left:629.00px;top:567.00px;font-size:14px;line-height:14px;color:#444;letter-spacing:0.545px;z-index:3;">David Wood`</div>
<div class="t" style="left:965.00px;top:567.00px;font-size:14px;line-height:14px;color:#444;letter-spacing:0.650px;z-index:3;">28/12/2023 13:56:34</div>
<div class="t" style="left:1198.00px;top:567.00px;font-size:14px;line-height:14px;color:#444;letter-spacing:0.182px;z-index:3;">QR Code / Barcode</div>
<div class="t" style="left:1366.00px;top:567.00px;font-size:14px;line-height:14px;color:#444;letter-spacing:0.618px;z-index:3;">1.23.234.143</div>
<div class="t" style="left:1517.00px;top:567.00px;font-size:14px;line-height:14px;color:#444;letter-spacing:0.482px;z-index:3;">Mobile | Android | Chrome 120.0.0.0</div>
<div class="r" style="left:849px;top:567px;width:54px;height:17px;background:#65a61d;border-radius:3px;z-index:3"></div>
<div class="t" style="left:855.36px;top:570.00px;font-size:11px;line-height:11px;color:#fff;letter-spacing:0.557px;z-index:4;">Present</div>
<div class="r" style="left:221px;top:588px;width:1678px;height:1px;background:#eeeeee;z-index:3"></div>
<div class="t" style="left:226.00px;top:597.00px;font-size:14px;line-height:14px;color:#444;z-index:3;">2</div>
<div class="t" style="left:282.00px;top:597.00px;font-size:14px;line-height:14px;color:#444;letter-spacing:0.866px;z-index:3;">1221</div>
<div class="t" style="left:463.00px;top:597.00px;font-size:14px;line-height:14px;color:#444;letter-spacing:0.866px;z-index:3;">0099</div>
<div class="t" style="left:629.00px;top:597.00px;font-size:14px;line-height:14px;color:#444;letter-spacing:0.238px;z-index:3;">Mohan Rana</div>
<div class="t" style="left:965.00px;top:597.00px;font-size:14px;line-height:14px;color:#444;letter-spacing:0.650px;z-index:3;">28/12/2023 13:56:54</div>
<div class="t" style="left:1198.00px;top:597.00px;font-size:14px;line-height:14px;color:#444;letter-spacing:0.182px;z-index:3;">QR Code / Barcode</div>
<div class="t" style="left:1366.00px;top:597.00px;font-size:14px;line-height:14px;color:#444;letter-spacing:0.618px;z-index:3;">1.23.234.143</div>
<div class="t" style="left:1517.00px;top:597.00px;font-size:14px;line-height:14px;color:#444;letter-spacing:0.482px;z-index:3;">Mobile | Android | Chrome 120.0.0.0</div>
<div class="r" style="left:858px;top:597px;width:36px;height:17px;background:#ff9410;border-radius:3px;z-index:3"></div>
<div class="t" style="left:864.03px;top:600.00px;font-size:11px;line-height:11px;color:#fff;letter-spacing:0.833px;z-index:4;">Late</div>
<div class="r" style="left:221px;top:618px;width:1678px;height:1px;background:#eeeeee;z-index:3"></div>
<div class="t" style="left:226.00px;top:627.00px;font-size:14px;line-height:14px;color:#444;z-index:3;">3</div>
<div class="t" style="left:282.00px;top:627.00px;font-size:14px;line-height:14px;color:#444;letter-spacing:0.866px;z-index:3;">3215</div>
<div class="t" style="left:629.00px;top:627.00px;font-size:14px;line-height:14px;color:#444;letter-spacing:0.333px;z-index:3;">George</div>
<div class="t" style="left:965.00px;top:627.00px;font-size:14px;line-height:14px;color:#444;letter-spacing:0.650px;z-index:3;">28/12/2023 13:57:13</div>
<div class="t" style="left:1198.00px;top:627.00px;font-size:14px;line-height:14px;color:#444;letter-spacing:0.182px;z-index:3;">QR Code / Barcode</div>
<div class="t" style="left:1366.00px;top:627.00px;font-size:14px;line-height:14px;color:#444;letter-spacing:0.618px;z-index:3;">1.23.234.143</div>
<div class="t" style="left:1517.00px;top:627.00px;font-size:14px;line-height:14px;color:#444;letter-spacing:0.482px;z-index:3;">Mobile | Android | Chrome 120.0.0.0</div>
<div class="r" style="left:847px;top:627px;width:59px;height:17px;background:#ff9410;border-radius:3px;z-index:3"></div>
<div class="t" style="left:852.92px;top:630.00px;font-size:11px;line-height:11px;color:#fff;letter-spacing:0.710px;z-index:4;">Half Day</div>
<div class="r" style="left:221px;top:648px;width:1678px;height:1px;background:#eeeeee;z-index:3"></div>
<div class="t" style="left:226.00px;top:657.00px;font-size:14px;line-height:14px;color:#444;z-index:3;">4</div>
<div class="t" style="left:282.00px;top:657.00px;font-size:14px;line-height:14px;color:#444;letter-spacing:0.812px;z-index:3;">36202</div>
<div class="t" style="left:463.00px;top:657.00px;font-size:14px;line-height:14px;color:#444;letter-spacing:0.812px;z-index:3;">20012</div>
<div class="t" style="left:629.00px;top:657.00px;font-size:14px;line-height:14px;color:#444;letter-spacing:0.434px;z-index:3;">Ankit Kapoor</div>
<div class="t" style="left:965.00px;top:657.00px;font-size:14px;line-height:14px;color:#444;letter-spacing:0.650px;z-index:3;">28/12/2023 13:57:46</div>
<div class="t" style="left:1198.00px;top:657.00px;font-size:14px;line-height:14px;color:#444;letter-spacing:0.182px;z-index:3;">QR Code / Barcode</div>
<div class="t" style="left:1366.00px;top:657.00px;font-size:14px;line-height:14px;color:#444;letter-spacing:0.618px;z-index:3;">1.23.234.143</div>
<div class="t" style="left:1517.00px;top:657.00px;font-size:14px;line-height:14px;color:#444;letter-spacing:0.482px;z-index:3;">Mobile | Android | Chrome 120.0.0.0</div>
<div class="r" style="left:847px;top:657px;width:59px;height:17px;background:#ff9410;border-radius:3px;z-index:3"></div>
<div class="t" style="left:852.92px;top:660.00px;font-size:11px;line-height:11px;color:#fff;letter-spacing:0.710px;z-index:4;">Half Day</div>
<div class="r" style="left:221px;top:679px;width:1678px;height:1px;background:#eeeeee;z-index:3"></div>
<div class="t" style="left:226.00px;top:687.00px;font-size:14px;line-height:14px;color:#444;z-index:3;">5</div>
<div class="t" style="left:282.00px;top:687.00px;font-size:14px;line-height:14px;color:#444;letter-spacing:0.866px;z-index:3;">4324</div>
<div class="t" style="left:463.00px;top:687.00px;font-size:14px;line-height:14px;color:#444;letter-spacing:1.210px;z-index:3;">2311</div>
<div class="t" style="left:629.00px;top:687.00px;font-size:14px;line-height:14px;color:#444;letter-spacing:0.377px;z-index:3;">Robert Thomas</div>
<div class="t" style="left:965.00px;top:687.00px;font-size:14px;line-height:14px;color:#444;letter-spacing:0.650px;z-index:3;">28/12/2023 14:44:23</div>
<div class="t" style="left:1198.00px;top:687.00px;font-size:14px;line-height:14px;color:#444;letter-spacing:0.182px;z-index:3;">QR Code / Barcode</div>
<div class="t" style="left:1366.00px;top:687.00px;font-size:14px;line-height:14px;color:#444;letter-spacing:0.618px;z-index:3;">1.22.246.120</div>
<div class="t" style="left:1517.00px;top:687.00px;font-size:14px;line-height:14px;color:#444;letter-spacing:0.482px;z-index:3;">Mobile | Android | Chrome 120.0.0.0</div>
<div class="r" style="left:849px;top:687px;width:54px;height:17px;background:#65a61d;border-radius:3px;z-index:3"></div>
<div class="t" style="left:855.36px;top:690.00px;font-size:11px;line-height:11px;color:#fff;letter-spacing:0.557px;z-index:4;">Present</div>
<div class="r" style="left:221px;top:709px;width:1678px;height:1px;background:#eeeeee;z-index:3"></div>
<div class="t" style="left:221.00px;top:726.00px;font-size:11px;line-height:11px;color:#333;letter-spacing:0.811px;z-index:3;">Records: 1 to 5 of 5</div>
<div class="r" style="left:1856px;top:719px;width:23px;height:18px;background:#ebebeb;z-index:3"></div>
<div class="t" style="left:1864.44px;top:723.00px;font-size:11px;line-height:11px;color:#555;z-index:4;">1</div>
<svg class="r" style="left:1844px;top:725px;z-index:3" width="6" height="8" viewBox="0 0 6 8"><path d="M4.3 1.2 L1.5 4 L4.3 6.8" fill="none" stroke="#666" stroke-width="1.1"/></svg>
<svg class="r" style="left:1886px;top:725px;z-index:3" width="6" height="8" viewBox="0 0 6 8"><path d="M1.7 1.2 L4.5 4 L1.7 6.8" fill="none" stroke="#666" stroke-width="1.1"/></svg>
<div class="r" style="left:200px;top:936px;width:1720px;height:19px;background:#ececec;border-top:1px solid #d2d6de;z-index:3"></div>
<div class="t" style="left:1787.00px;top:941.00px;font-size:11px;line-height:11px;color:#444;letter-spacing:0.734px;z-index:4;">© 2023 Smart School</div>
</body></html>
